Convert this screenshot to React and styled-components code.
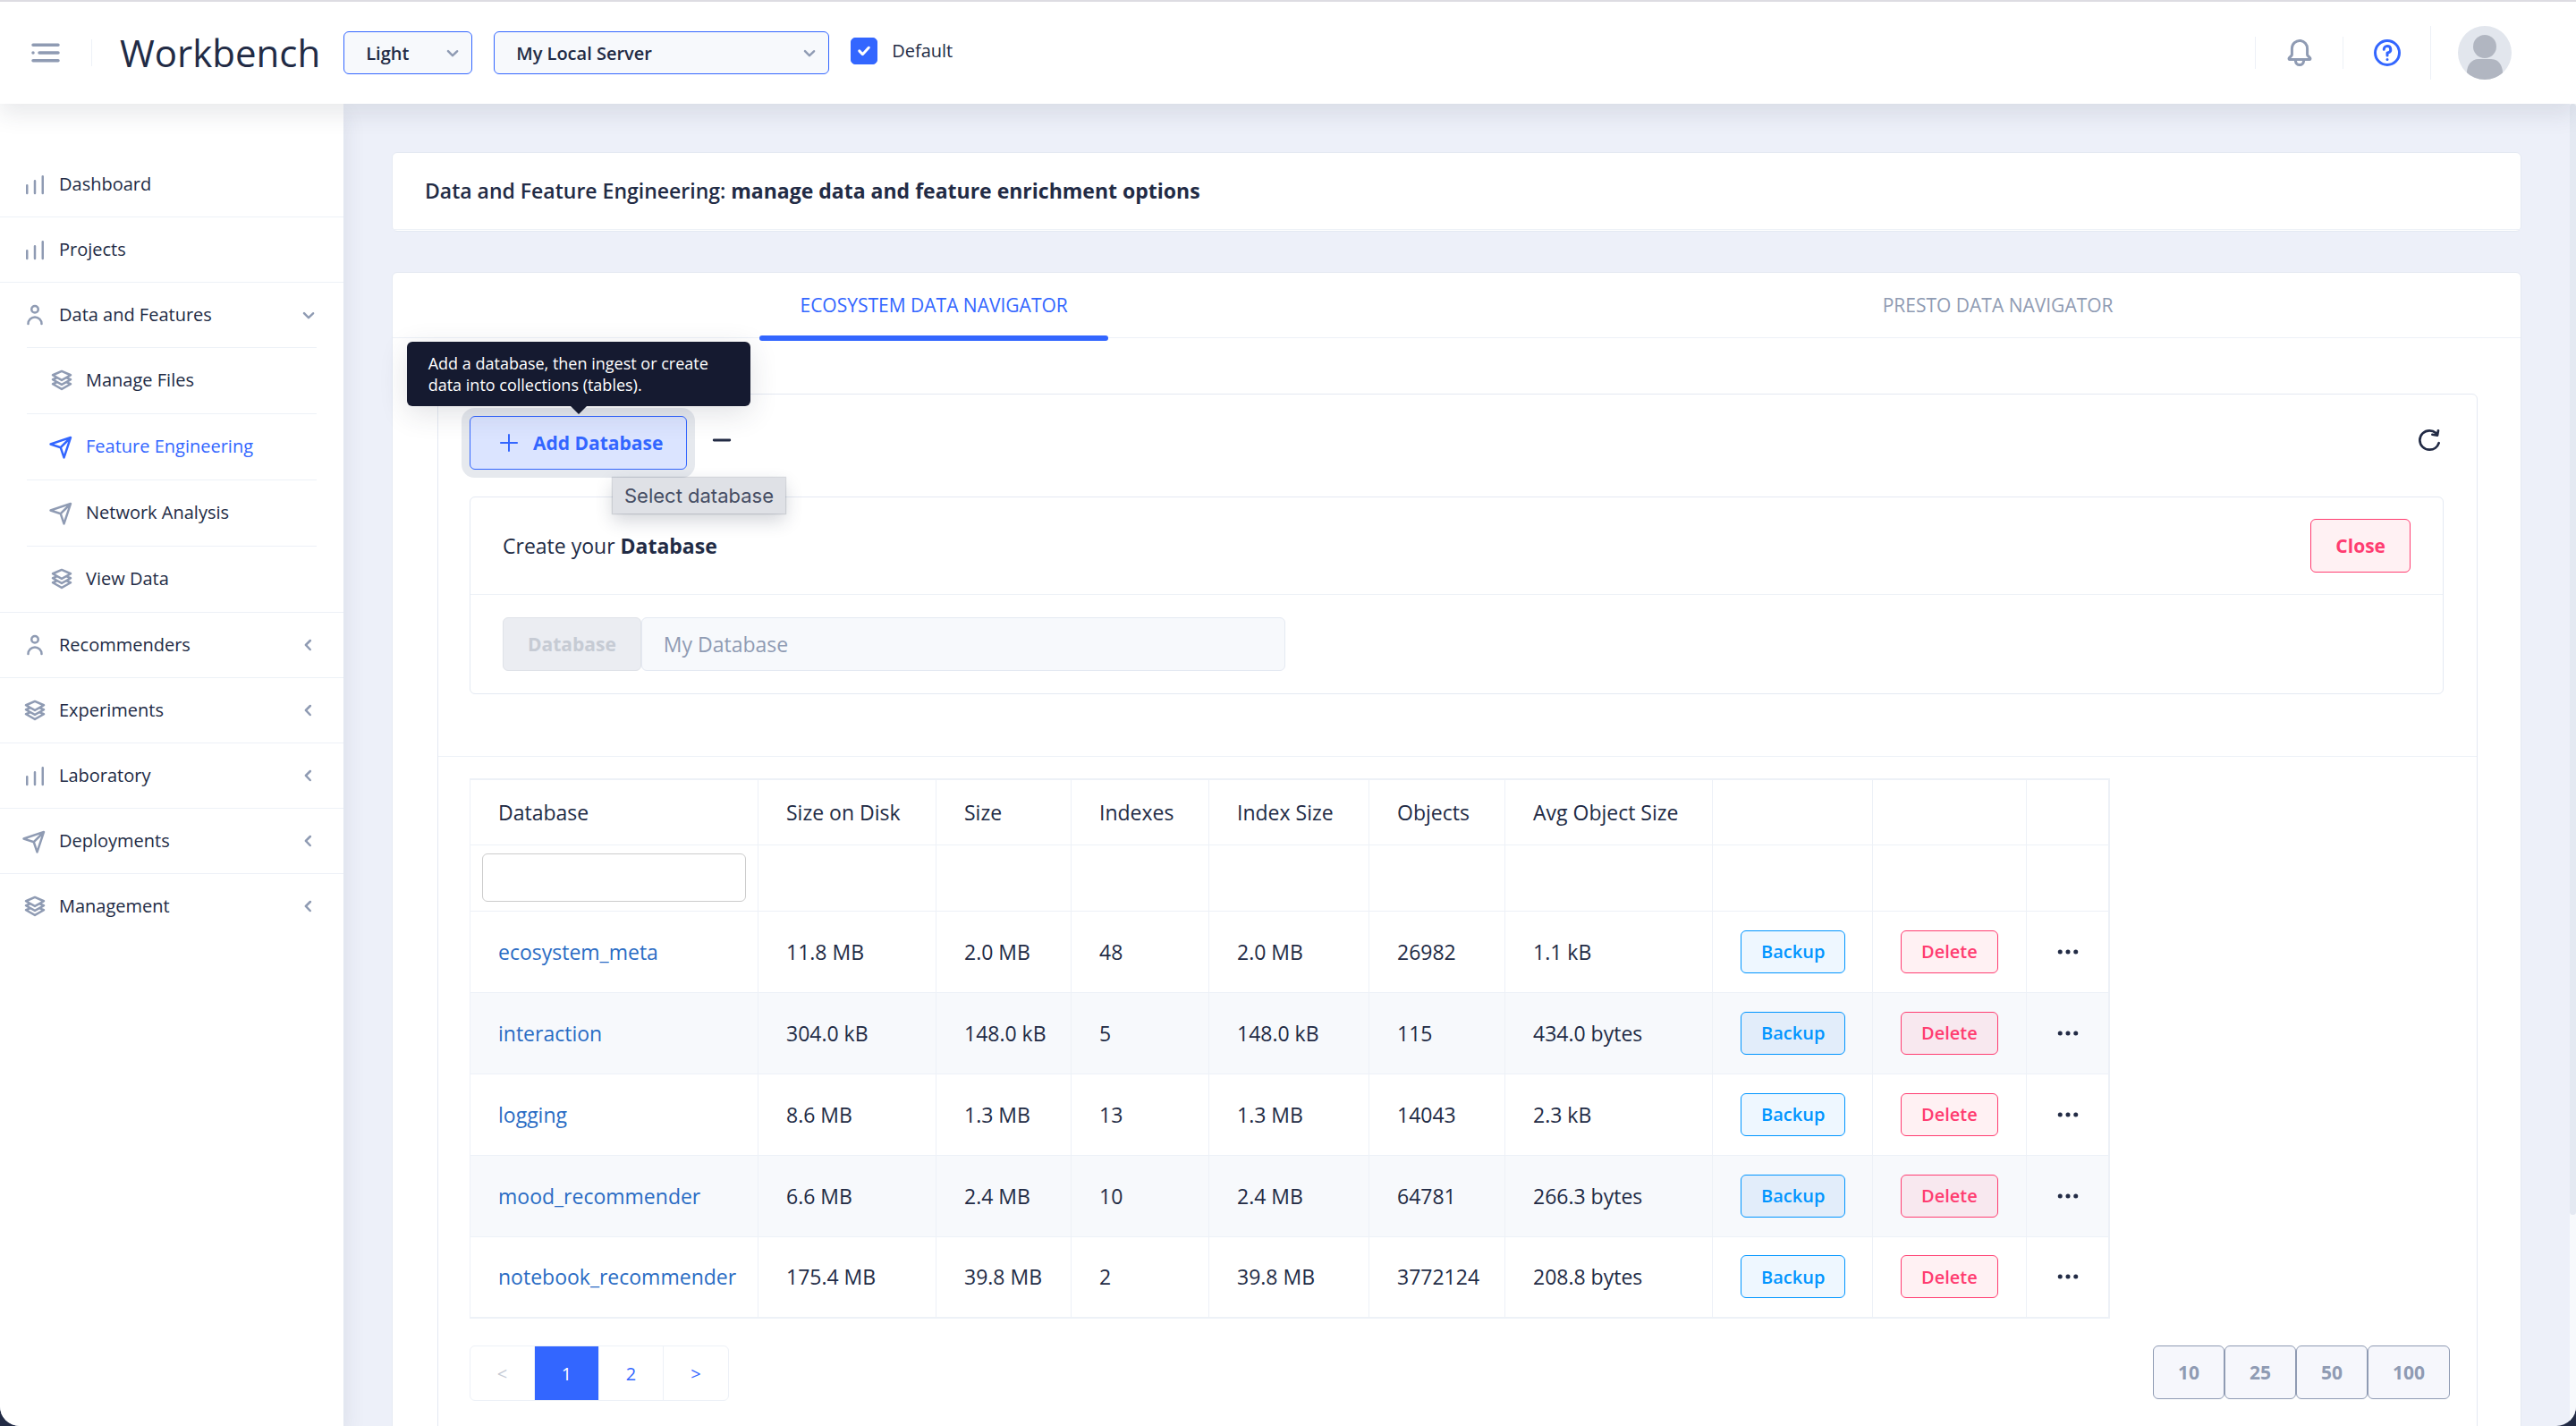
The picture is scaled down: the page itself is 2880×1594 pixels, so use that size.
import React, { useState } from 'react'
import styled, { createGlobalStyle, css } from 'styled-components';

const ICONS = {
  bars: 'M12 8a1 1 0 0 0-1 1v11a1 1 0 0 0 2 0V9a1 1 0 0 0-1-1z M19 4a1 1 0 0 0-1 1v15a1 1 0 0 0 2 0V5a1 1 0 0 0-1-1z M5 12a1 1 0 0 0-1 1v7a1 1 0 0 0 2 0v-7a1 1 0 0 0-1-1z',
  person: 'M12 11a4 4 0 1 0-4-4 4 4 0 0 0 4 4zm0-6a2 2 0 1 1-2 2 2 2 0 0 1 2-2zm0 8a7 7 0 0 0-7 7 1 1 0 0 0 2 0 5 5 0 0 1 10 0 1 1 0 0 0 2 0 7 7 0 0 0-7-7z',
  layers: 'M21 11.35a1 1 0 0 0-.61-.86l-2.15-.92 2.26-1.3a1 1 0 0 0 .5-.92 1 1 0 0 0-.61-.86l-8-3.41a1 1 0 0 0-.78 0l-8 3.41a1 1 0 0 0-.61.86 1 1 0 0 0 .5.92l2.26 1.3-2.15.92a1 1 0 0 0-.61.86 1 1 0 0 0 .5.92l2.26 1.3-2.15.92a1 1 0 0 0-.61.86 1 1 0 0 0 .5.92l8 4.6a1 1 0 0 0 1 0l8-4.6a1 1 0 0 0 .5-.92 1 1 0 0 0-.61-.86l-2.15-.92 2.26-1.3a1 1 0 0 0 .5-.92zm-9-6.26l5.76 2.45L12 10.85 6.24 7.54zm-.5 7.78a1 1 0 0 0 1 0l3.57-2 1.69.72L12 14.85l-5.76-3.31 1.69-.72zm6.26 2.67L12 18.85l-5.76-3.31 1.69-.72 3.57 2.05a1 1 0 0 0 1 0l3.57-2.05z',
  plane: 'M21 4a1.31 1.31 0 0 0-.06-.27v-.09a1 1 0 0 0-.2-.3 1 1 0 0 0-.29-.19h-.09a.86.86 0 0 0-.31-.15H20a1 1 0 0 0-.3 0l-18 6a1 1 0 0 0 0 1.9l8.53 2.84 2.84 8.53a1 1 0 0 0 1.9 0l6-18A1 1 0 0 0 21 4zm-4.7 2.29l-5.57 5.57L5.16 10zM14 18.84l-1.86-5.57 5.57-5.57z',
  bell: 'M20.52 15.21l-1.8-1.81V8.94a6.86 6.86 0 0 0-5.82-6.88 6.74 6.74 0 0 0-7.62 6.67v4.67l-1.8 1.81A1.64 1.64 0 0 0 4.64 18H8v.34A3.84 3.84 0 0 0 12 22a3.84 3.84 0 0 0 4-3.66V18h3.36a1.64 1.64 0 0 0 1.16-2.79zM14 18.34A1.88 1.88 0 0 1 12 20a1.88 1.88 0 0 1-2-1.66V18h4zM5.51 16l1.18-1.18a2 2 0 0 0 .59-1.42V8.73A4.73 4.73 0 0 1 8.9 5.17 4.67 4.67 0 0 1 12.64 4a4.86 4.86 0 0 1 4.08 4.9v4.5a2 2 0 0 0 .58 1.42L18.49 16z',
  question: 'M12 2a10 10 0 1 0 10 10A10 10 0 0 0 12 2zm0 18a8 8 0 1 1 8-8 8 8 0 0 1-8 8z M12 6a3.5 3.5 0 0 0-3.5 3.5 1 1 0 0 0 2 0A1.5 1.5 0 1 1 12 11a1 1 0 0 0-1 1v2a1 1 0 0 0 2 0v-1.16A3.49 3.49 0 0 0 12 6z M12 16a1 1 0 1 0 0 2 1 1 0 0 0 0-2z',
  menu: 'M4 11a1 1 0 1 0 0 2 1 1 0 0 0 0-2z M8 11h12a1 1 0 0 1 0 2H8a1 1 0 0 1 0-2z M4 16h16a1 1 0 0 1 0 2H4a1 1 0 0 1 0-2z M4 6h16a1 1 0 0 1 0 2H4a1 1 0 0 1 0-2z',
  down: 'M12 15.5a1 1 0 0 1-.71-.29l-4-4a1 1 0 1 1 1.42-1.42L12 13.1l3.3-3.18a1 1 0 1 1 1.38 1.44l-4 3.86a1 1 0 0 1-.68.28z',
  left: 'M13.36 17a1 1 0 0 1-.72-.31l-3.86-4a1 1 0 0 1 0-1.4l4-4a1 1 0 1 1 1.42 1.42L10.9 12l3.18 3.3a1 1 0 0 1 0 1.41 1 1 0 0 1-.72.29z',
  plus: 'M18.4 11.3h-5.7V5.6a.7.7 0 0 0-1.4 0v5.7H5.6a.7.7 0 0 0 0 1.4h5.7v5.7a.7.7 0 0 0 1.4 0v-5.7h5.7a.7.7 0 0 0 0-1.4z',
  minus: 'M18.2 13H5.8a1 1 0 0 1 0-2h12.4a1 1 0 0 1 0 2z',
  refresh: 'M20.3 13.43a1 1 0 0 0-1.25.65A7.14 7.14 0 0 1 12.18 19 7.1 7.1 0 0 1 5 12a7.1 7.1 0 0 1 7.18-7 7.26 7.26 0 0 1 4.65 1.67l-2.17-.36a1 1 0 0 0-1.15.83 1 1 0 0 0 .83 1.15l4.24.7h.17a1 1 0 0 0 .34-.06.33.33 0 0 0 .1-.06.78.78 0 0 0 .2-.11l.09-.11c0-.05.09-.09.13-.15s0-.1.05-.14a1.34 1.34 0 0 0 .07-.18l.75-4a1 1 0 0 0-2-.38l-.27 1.45A9.21 9.21 0 0 0 12.18 3 9.1 9.1 0 0 0 3 12a9.1 9.1 0 0 0 9.18 9A9.12 9.12 0 0 0 21 14.68a1 1 0 0 0-.7-1.25z',
  more: 'M12 10a2 2 0 1 0 0 4 2 2 0 0 0 0-4z M19 10a2 2 0 1 0 0 4 2 2 0 0 0 0-4z M5 10a2 2 0 1 0 0 4 2 2 0 0 0 0-4z',
  check: 'M9.86 18a1 1 0 0 1-.73-.32l-4.86-5.17a1 1 0 1 1 1.46-1.37l4.12 4.39 8.41-9.2a1 1 0 1 1 1.48 1.34l-9.14 10a1 1 0 0 1-.73.33z',
};

const MENU = [
  { title: 'Dashboard', icon: 'bars' },
  { title: 'Projects', icon: 'bars' },
  {
    title: 'Data and Features',
    icon: 'person',
    children: [
      { title: 'Manage Files', icon: 'layers' },
      { title: 'Feature Engineering', icon: 'plane', active: true },
      { title: 'Network Analysis', icon: 'plane' },
      { title: 'View Data', icon: 'layers' },
    ],
  },
  { title: 'Recommenders', icon: 'person', closed: true },
  { title: 'Experiments', icon: 'layers', closed: true },
  { title: 'Laboratory', icon: 'bars', closed: true },
  { title: 'Deployments', icon: 'plane', closed: true },
  { title: 'Management', icon: 'layers', closed: true },
];

const COLUMNS = [
  { title: 'Database', width: 322 },
  { title: 'Size on Disk', width: 199 },
  { title: 'Size', width: 151 },
  { title: 'Indexes', width: 154 },
  { title: 'Index Size', width: 179 },
  { title: 'Objects', width: 152 },
  { title: 'Avg Object Size', width: 232 },
  { title: '', width: 179 },
  { title: '', width: 172 },
  { title: '', width: 92 },
];

const DATABASES = [
  ['ecosystem_meta', '11.8 MB', '2.0 MB', '48', '2.0 MB', '26982', '1.1 kB'],
  ['interaction', '304.0 kB', '148.0 kB', '5', '148.0 kB', '115', '434.0 bytes'],
  ['logging', '8.6 MB', '1.3 MB', '13', '1.3 MB', '14043', '2.3 kB'],
  ['mood_recommender', '6.6 MB', '2.4 MB', '10', '2.4 MB', '64781', '266.3 bytes'],
  ['notebook_recommender', '175.4 MB', '39.8 MB', '2', '39.8 MB', '3772124', '208.8 bytes'],
];

function Icon({ name, size = 30 }) {
  return (
    <Svg viewBox="0 0 24 24" width={size} height={size} aria-hidden="true">
      <path d={ICONS[name]} />
    </Svg>
  )
}

function Header() {
  const [isDefault, setIsDefault] = useState(true);

  return (
    <TopBar>
      <MenuToggle type="button" aria-label="Toggle menu"><Icon name="menu" size={42} /></MenuToggle>
      <Title href="#">Workbench</Title>
      <SelectWrap $width={144}>
        <Select aria-label="Theme" defaultValue="Light">
          <option>Light</option>
          <option>Dark</option>
        </Select>
        <Icon name="down" />
      </SelectWrap>
      <SelectWrap $width={375}>
        <Select aria-label="Server" defaultValue="My Local Server">
          <option>My Local Server</option>
        </Select>
        <Icon name="down" />
      </SelectWrap>
      <CheckLabel>
        <CheckWrap>
          <CheckBox type="checkbox" checked={isDefault} onChange={e => setIsDefault(e.target.checked)} />
          {isDefault && <Icon name="check" size={18} />}
        </CheckWrap>
        Default
      </CheckLabel>
      <Actions>
        <Action type="button" aria-label="Notifications"><Icon name="bell" size={36} /></Action>
        <Action type="button" aria-label="Help" $primary><Icon name="question" size={36} /></Action>
        <User type="button" aria-label="User">
          <svg viewBox="0 0 60 60" width="60" height="60" aria-hidden="true">
            <clipPath id="avatar"><circle cx="30" cy="30" r="30" /></clipPath>
            <g clipPath="url(#avatar)">
              <rect width="60" height="60" fill="#e2e6ed" />
              <circle cx="30" cy="23" r="13" fill="#b1b6c1" />
              <path d="M10 56V52C10 44 15 37 23 37H37C45 37 50 44 50 52V60H10z" fill="#b1b6c1" />
            </g>
          </svg>
        </User>
      </Actions>
    </TopBar>
  )
}

function Sidebar() {
  return (
    <SideNav>
      <MenuList>
        {MENU.map(item => (
          <MenuItem key={item.title}>
            <MenuLink href="#">
              <Icon name={item.icon} />
              <span>{item.title}</span>
              {item.children && <Icon name="down" />}
              {item.closed && <Icon name="left" />}
            </MenuLink>
            {item.children && (
              <SubList>
                {item.children.map(child => (
                  <SubItem key={child.title}>
                    <MenuLink href="#" $active={child.active}>
                      <Icon name={child.icon} />
                      <span>{child.title}</span>
                    </MenuLink>
                  </SubItem>
                ))}
              </SubList>
            )}
          </MenuItem>
        ))}
      </MenuList>
    </SideNav>
  )
}

function CreateDatabase() {
  return (
    <FormCard>
      <FormHeader>
        <span>Create your <b>Database</b></span>
        <Button type="button" $status="danger">Close</Button>
      </FormHeader>
      <FormBody>
        <InputLabel htmlFor="database-name">Database</InputLabel>
        <Input id="database-name" placeholder="My Database" />
      </FormBody>
    </FormCard>
  )
}

function DatabaseTable() {
  return (
    <Table>
      <colgroup>
        {COLUMNS.map((column, index) => <Col key={index} $width={column.width} />)}
      </colgroup>
      <thead>
        <tr>
          {COLUMNS.map((column, index) => <Th key={index} scope="col">{column.title}</Th>)}
        </tr>
        <tr>
          {COLUMNS.map((column, index) => (
            <Th key={index} $filter>
              {index === 0 && <FilterInput aria-label="Filter databases" />}
            </Th>
          ))}
        </tr>
      </thead>
      <tbody>
        {DATABASES.map(([name, ...values]) => (
          <Row key={name}>
            <Td><a href="#">{name}</a></Td>
            {values.map((value, index) => <Td key={index}>{value}</Td>)}
            <Td><SmallButton type="button" $status="info">Backup</SmallButton></Td>
            <Td><SmallButton type="button" $status="danger">Delete</SmallButton></Td>
            <Td><IconButton type="button" aria-label={`More for ${name}`}><Icon name="more" /></IconButton></Td>
          </Row>
        ))}
      </tbody>
    </Table>
  )
}

function App() {
  return (
    <Frame>
      <GlobalStyle />
      <Header />
      <Layout>
        <Sidebar />
        <Content>
          <Card>
            <CardTitle>Data and Feature Engineering: <b>manage data and feature enrichment options</b></CardTitle>
          </Card>
          <Card>
            <Tabs role="tablist">
              <Tab><TabButton type="button" role="tab" aria-selected="true" $active>ECOSYSTEM DATA NAVIGATOR</TabButton></Tab>
              <Tab><TabButton type="button" role="tab" aria-selected="false">PRESTO DATA NAVIGATOR</TabButton></Tab>
            </Tabs>
            <Panel>
              <PanelTop>
                <Toolbar>
                  <TipAnchor>
                    <AddButton type="button" $status="primary"><Icon name="plus" size={34} />Add Database</AddButton>
                    <Tooltip role="tooltip">Add a database, then ingest or create data into collections (tables).</Tooltip>
                    <HoverTip>Select database</HoverTip>
                  </TipAnchor>
                  <ToolButton type="button" aria-label="Collapse"><Icon name="minus" size={34} /></ToolButton>
                  <ToolButton type="button" aria-label="Refresh" $end><Icon name="refresh" size={32} /></ToolButton>
                </Toolbar>
                <CreateDatabase />
              </PanelTop>
              <PanelBottom>
                <DatabaseTable />
                <Footer>
                  <Pages>
                    <Page type="button" disabled>&lt;</Page>
                    <Page type="button" $current>1</Page>
                    <Page type="button">2</Page>
                    <Page type="button">&gt;</Page>
                  </Pages>
                  <PageSizes>
                    {[10, 25, 50, 100].map(size => <Button key={size} type="button" $status="basic">{size}</Button>)}
                  </PageSizes>
                </Footer>
              </PanelBottom>
            </Panel>
          </Card>
        </Content>
        <ScrollTrack><ScrollThumb /></ScrollTrack>
      </Layout>
    </Frame>
  )
}

export default App

const GlobalStyle = createGlobalStyle`
  * {
    box-sizing: border-box;
  }

  body {
    margin: 0;
    background: #222b45;
    color: #222b45;
    font-family: "Open Sans", sans-serif;
    font-size: 23px;
    line-height: 32px;
  }

  button, input, select {
    font-family: inherit;
    color: inherit;
  }

  button {
    cursor: pointer;
  }
`

const statuses = {
  primary: css`
    color: #3366ff;
    background: #dbe4ff;
    border-color: #3366ff;
  `,
  danger: css`
    color: #ff3d71;
    background: #fff1f3;
    border-color: #ff3d71;
  `,
  info: css`
    color: #0095ff;
    background: #eef7ff;
    border-color: #0095ff;
  `,
  basic: css`
    color: #8f9bb3;
    background: #f6f7fc;
    border-color: #8f9bb3;
  `,
};

const Svg = styled.svg`
  display: block;
  flex-shrink: 0;
  fill: currentColor;
`

const Frame = styled.div`
  display: flex;
  flex-direction: column;
  height: 100vh;
  overflow: hidden;
  background: #edf0f9;
  border-top: 2px solid #dddce2;
  border-radius: 0 0 22px 22px;
`

const TopBar = styled.header`
  position: relative;
  z-index: 3;
  flex-shrink: 0;
  display: flex;
  align-items: center;
  height: 114px;
  padding: 0 72px 0 30px;
  background: #fff;
  box-shadow: 0 12px 24px rgba(44, 51, 73, 0.1);
`

const plainButton = css`
  display: flex;
  align-items: center;
  justify-content: center;
  padding: 0;
  border: 0;
  background: none;
`

const MenuToggle = styled.button`
  ${plainButton}
  color: #8f9bb3;
`

const Title = styled.a`
  display: flex;
  align-items: center;
  height: 30px;
  margin: 0 26px 0 30px;
  padding-left: 31px;
  border-left: 1px solid #edf1f7;
  color: #222b45;
  font-size: 42px;
  text-decoration: none;
`

const SelectWrap = styled.div`
  position: relative;
  width: ${props => props.$width}px;
  margin-right: 24px;
  color: #8f9bb3;

  svg {
    position: absolute;
    top: 9px;
    right: 7px;
    pointer-events: none;
  }
`

const Select = styled.select`
  appearance: none;
  width: 100%;
  height: 48px;
  padding: 0 40px 0 24px;
  border: 1px solid #3366ff;
  border-radius: 6px;
  background: #f7f9fc;
  color: #222b45;
  font-size: 20px;
  font-weight: 600;
`

const CheckLabel = styled.label`
  display: flex;
  align-items: center;
  gap: 16px;
  padding-bottom: 4px;
  font-size: 20px;
`

const CheckWrap = styled.span`
  position: relative;
  width: 30px;
  height: 30px;
  color: #fff;

  svg {
    position: absolute;
    top: 6px;
    left: 6px;
    stroke: #fff;
    stroke-width: 2;
    pointer-events: none;
  }
`

const CheckBox = styled.input`
  appearance: none;
  display: block;
  width: 30px;
  height: 30px;
  margin: 0;
  border: 1px solid #3366ff;
  border-radius: 5px;
  background: #fff;

  &:checked {
    background: #3366ff;
  }
`

const Actions = styled.div`
  display: flex;
  align-items: center;
  margin-left: auto;
`

const Action = styled.button`
  ${plainButton}
  height: 36px;
  padding: 0 30px 0 31px;
  border-left: 1px solid #edf1f7;
  color: ${props => props.$primary ? '#3366ff' : '#8f9bb3'};
`

const User = styled.button`
  ${plainButton}
  padding-left: 30px;
  border-left: 1px solid #edf1f7;

  svg {
    display: block;
  }
`

const Layout = styled.div`
  flex: 1;
  display: flex;
  min-height: 0;
`

const SideNav = styled.nav`
  position: relative;
  z-index: 1;
  flex: 0 0 384px;
  padding-top: 54px;
  background: #fff;
  box-shadow: 0 12px 24px rgba(44, 51, 73, 0.1);
`

const MenuList = styled.ul`
  margin: 0;
  padding: 0;
  list-style: none;
`

const MenuItem = styled.li`
  border-bottom: 1px solid #edf1f7;

  &:last-child {
    border-bottom: 0;
  }
`

const MenuLink = styled.a`
  display: flex;
  align-items: center;
  gap: 12px;
  height: 72px;
  padding: 0 24px;
  color: #222b45;
  font-size: 20px;
  text-decoration: none;

  span {
    flex: 1;
  }

  svg {
    color: #8f9bb3;
  }

  ${props => props.$active && css`
    &, svg {
      color: #3366ff;
    }
  `}
`

const SubList = styled(MenuList)`
  margin: 0 30px;
`

const SubItem = styled.li`
  padding-bottom: 1px;
  border-top: 1px solid #edf1f7;
`

const Content = styled.main`
  flex: 1;
  display: flex;
  flex-direction: column;
  gap: 45px;
  min-width: 0;
  padding: 54px 54px 0;
  overflow: hidden;
`

const ScrollTrack = styled.div`
  flex: 0 0 7px;
  background: #f7f9fc;
`

const ScrollThumb = styled.div`
  height: 84%;
  border-radius: 4px;
  background: #e4e9f2;
`

const Card = styled.section`
  flex-shrink: 0;
  padding-bottom: 1px;
  border: 1px solid #e4e9f2;
  border-radius: 6px;
  background: #fff;
`

const CardTitle = styled.header`
  padding: 26px 36px 27px;
  border-bottom: 1px solid #edf1f7;
  font-weight: 600;

  b {
    font-weight: 700;
  }
`

const Tabs = styled.div`
  display: flex;
  height: 73px;
  border-bottom: 1px solid #edf1f7;
`

const Tab = styled.div`
  flex: 1 1 auto;
  display: flex;
  justify-content: center;
`

const TabButton = styled.button`
  ${plainButton}
  position: relative;
  padding: 0 45px;
  color: #8f9bb3;
  font-size: 21px;

  ${props => props.$active && css`
    color: #3366ff;

    &::after {
      content: '';
      position: absolute;
      right: 0;
      bottom: -4px;
      left: 0;
      height: 6px;
      border-radius: 3px;
      background: #3366ff;
    }
  `}
`

const Panel = styled.div`
  margin: 62px 48px 62px 50px;
  border: 1px solid #e4e9f2;
  border-radius: 6px;
`

const PanelTop = styled.div`
  padding: 24px 37px 69px 35px;
  border-bottom: 1px solid #edf1f7;
`

const Toolbar = styled.div`
  display: flex;
  align-items: flex-start;
  gap: 22px;
  margin-bottom: 30px;
`

const TipAnchor = styled.div`
  position: relative;
`

const Button = styled.button`
  height: 60px;
  padding: 0 27px;
  border: 1px solid;
  border-radius: 6px;
  font-size: 21px;
  font-weight: 700;
  ${props => statuses[props.$status]}
`

const AddButton = styled(Button)`
  display: flex;
  align-items: center;
  gap: 10px;
  padding: 0 26px;
  box-shadow: 0 0 0 9px #e6e9ee;
`

const Tooltip = styled.div`
  position: absolute;
  z-index: 2;
  bottom: 71px;
  left: 50%;
  width: 384px;
  padding: 12px 24px;
  border-radius: 6px;
  background: #151a30;
  color: #fff;
  font-size: 18px;
  line-height: 24px;
  transform: translateX(-50%);
  box-shadow: 0 8px 32px rgba(44, 51, 73, 0.14);

  &::after {
    content: '';
    position: absolute;
    top: 100%;
    left: 50%;
    margin-left: -9px;
    border: 9px solid transparent;
    border-bottom: 0;
    border-top-color: #151a30;
  }
`

const HoverTip = styled.div`
  position: absolute;
  z-index: 2;
  top: 69px;
  left: 160px;
  padding: 4px 13px;
  background: #dfe1e6;
  color: #454d63;
  font-family: Inter, sans-serif;
  font-size: 22px;
  white-space: nowrap;
  box-shadow: 0 0 1px 1px rgba(34, 43, 69, 0.16), 0 8px 20px rgba(34, 43, 69, 0.2);
`

const ToolButton = styled.button`
  ${plainButton}
  height: 54px;
  ${props => props.$end && css`
    margin-left: auto;
  `}
`

const FormCard = styled.form`
  border: 1px solid #e4e9f2;
  border-radius: 6px;
`

const FormHeader = styled.div`
  display: flex;
  align-items: center;
  justify-content: space-between;
  padding: 24px 36px;
  border-bottom: 1px solid #edf1f7;
`

const FormBody = styled.div`
  display: flex;
  padding: 25px 36px;
`

const InputLabel = styled.label`
  display: flex;
  align-items: center;
  padding: 0 27px;
  border: 1px solid #dfe2e8;
  border-radius: 6px;
  background: #ebedf2;
  color: #c6cbd4;
  font-size: 21px;
  font-weight: 700;
`

const Input = styled.input`
  width: 720px;
  height: 60px;
  padding: 0 24px;
  border: 1px solid #e4e9f2;
  border-radius: 6px;
  background: #f7f9fc;
  font-size: 23px;

  &::placeholder {
    color: #8f9bb3;
  }
`

const PanelBottom = styled.div`
  padding: 24px 30px 60px 35px;
`

const Table = styled.table`
  table-layout: fixed;
  width: 1832px;
  border: 2px solid #edf1f7;
  border-left-width: 1px;
  border-collapse: collapse;
`

const Col = styled.col`
  width: ${props => props.$width}px;
`

const cell = css`
  padding: 0 31px;
  border: 1px solid #edf1f7;
  text-align: left;
  font-weight: 400;
  white-space: nowrap;
`

const Th = styled.th`
  ${cell}
  height: 73px;

  ${props => props.$filter && css`
    height: 74px;
    padding: 0 13px;
  `}
`

const Td = styled.td`
  ${cell}
  height: 91px;

  a {
    color: #2a6cc4;
    text-decoration: none;
  }
`

const FilterInput = styled.input`
  display: block;
  width: 100%;
  height: 54px;
  padding: 0 12px;
  border: 1px solid #ccc;
  border-radius: 6px;
  background: #fff;
  font-size: 20px;
`

const SmallButton = styled(Button)`
  display: block;
  height: 48px;
  padding: 0 22px;
  font-size: 20px;
  font-weight: 600;
`

const Row = styled.tr`
  &:nth-child(even) {
    background: #f7f9fc;
  }

  &:nth-child(even) ${SmallButton} {
    background: #e2edfa;
  }

  &:nth-child(even) td:nth-child(9) ${SmallButton} {
    background: #f8e8ef;
  }
`

const IconButton = styled.button`
  ${plainButton}
`

const Footer = styled.div`
  display: flex;
  align-items: flex-start;
  justify-content: space-between;
  padding-top: 30px;
`

const Pages = styled.nav`
  display: flex;
  border: 1px solid #edf1f7;
  border-radius: 6px;
`

const Page = styled.button`
  width: 72px;
  height: 60px;
  border: 0;
  border-right: 1px solid #edf1f7;
  background: none;
  color: #3366ff;
  font-size: 20px;

  &:last-child {
    border-right: 0;
  }

  &:disabled {
    color: #c5cad4;
  }

  ${props => props.$current && css`
    background: #3366ff;
    color: #fff;
  `}
`

const PageSizes = styled.div`
  display: flex;
`
